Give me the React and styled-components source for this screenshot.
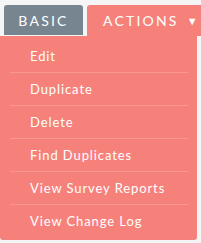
import React from 'react';
import styled, { createGlobalStyle } from 'styled-components';

const GlobalStyle = createGlobalStyle`
    body{
        margin:0;
        background:#f5f5f5;
        font-family:Lato, "Liberation Sans", sans-serif;
    }
`;

const items = ['Edit', 'Duplicate', 'Delete', 'Find Duplicates', 'View Survey Reports', 'View Change Log'];

function App() {
    return (
        <Page>
            <GlobalStyle />
            <Tabs>
                <Tab>BASIC</Tab>
                <Tab active>
                    ACTIONS<Caret>▼</Caret>
                </Tab>
            </Tabs>
            <Menu>
                {items.map((label, i) => (
                    <MenuItem key={label} last={i === items.length - 1}>{label}</MenuItem>
                ))}
            </Menu>
        </Page>
    )
}

const Page = styled.div`
    width:201px;
    height:243px;
    overflow:hidden;
`;

const Tabs = styled.div`
    display:flex;
    align-items:flex-start;
    gap:4px;
    padding:5px 0 0 4px;
`;

const Tab = styled.div`
    display:flex;
    align-items:center;
    justify-content:${p => p.active ? 'flex-start' : 'center'};
    width:${p => p.active ? '120px' : '79px'};
    height:${p => p.active ? '31px' : '30px'};
    padding-left:${p => p.active ? '16px' : '0'};
    padding-bottom:${p => p.active ? '1px' : '0'};
    box-sizing:border-box;
    border-radius:3px 3px 0 0;
    background:${p => p.active ? '#f6817a' : '#778590'};
    color:#fff;
    font-size:14px;
    letter-spacing:2.2px;
    flex-shrink:0;
`;

const Caret = styled.span`
    margin-left:8px;
    font-size:11px;
    letter-spacing:0;
`;

const Menu = styled.div`
    width:197px;
    background:#f6817a;
    border-radius:0 0 3px 3px;
    padding:4px 9px 3px 10px;
    box-sizing:border-box;
`;

const MenuItem = styled.div`
    box-sizing:border-box;
    border-bottom:${p => p.last ? 'none' : '1px solid #f99890'};
    height:${p => p.last ? '32px' : '33px'};
    display:flex;
    align-items:center;
    padding-left:20px;
    color:#fff;
    font-size:13px;
    letter-spacing:0.9px;
`;

export default App;
